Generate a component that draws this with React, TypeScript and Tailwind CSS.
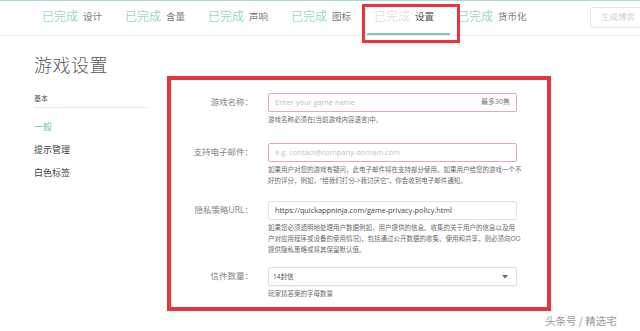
import { useState } from "react";

type Step = { label: string; active?: boolean };

const STEPS: Step[] = [
  { label: "设计" },
  { label: "含量" },
  { label: "声响" },
  { label: "图标" },
  { label: "设置", active: true },
  { label: "货币化" },
];

const SIDE_LINKS = ["一般", "提示管理", "白色标签"];

const SANS = "font-['Open_Sans','Noto_Sans_CJK_SC',sans-serif]";

function Field({
  label,
  className,
  children,
  help,
}: {
  label: string;
  className: string;
  children: React.ReactNode;
  help: string[];
}) {
  return (
    <div className={"flex " + className}>
      <div className="w-[82px] h-[19px] flex items-center justify-end text-[8.5px] text-[#858585]">
        {label}
      </div>
      <div className="ml-[15px] w-[249px]">
        {children}
        <div className="mt-[2px] text-[6.5px] leading-[11px] text-[#6a6a6a] whitespace-nowrap">
          {help.map((line) => (
            <div key={line}>{line}</div>
          ))}
        </div>
      </div>
    </div>
  );
}

export default function App() {
  const [letters, setLetters] = useState("14封信");

  return (
    <div
      className={
        "relative w-[640px] h-[331px] overflow-hidden bg-white " + SANS
      }
    >
      <div className="h-px bg-[#a9ddd2]" />

      {/* 步骤导航 */}
      <nav className="flex h-[35px] border-b border-[#ececec] pl-[35px]">
        {STEPS.map((s) => (
          <div
            key={s.label}
            className={
              "w-[83px] pl-[7px] flex items-center gap-[5px] border-b-2 " +
              (s.active ? "border-[#7ccab6]" : "border-transparent")
            }
          >
            <span
              className={
                "text-[12px] font-light " +
                (s.active ? "text-[#d6d6d6]" : "text-[#6ec6b1]")
              }
            >
              已完成
            </span>
            <span
              className={
                "text-[9.5px] " + (s.active ? "text-[#555]" : "text-[#7a7a7a]")
              }
            >
              {s.label}
            </span>
          </div>
        ))}
        <div className="ml-auto mt-[6px] h-[21px] w-[56px] -mr-[6px] flex items-center pl-[10px] border border-[#e6e6e6] rounded-[2px] text-[8.5px] text-[#cfcfcf]">
          生成博弈
        </div>
      </nav>

      <div className="flex pl-[34px]">
        {/* 侧边栏 */}
        <aside className="w-[113px] pt-[17px]">
          <h1 className="text-[18px] leading-[24px] font-light text-[#5a5a5a] tracking-[0.5px]">
            游戏设置
          </h1>
          <div className="mt-[17px] pb-[3px] border-b border-[#e8e8e8] text-[7px] leading-[10px] text-[#555]">
            基本
          </div>
          <ul className="mt-[12px] space-y-[9px]">
            {SIDE_LINKS.map((l, i) => (
              <li
                key={l}
                className={
                  "text-[9px] leading-[14px] " +
                  (i === 0 ? "text-[#6ec6b1]" : "text-[#444]")
                }
              >
                {l}
              </li>
            ))}
          </ul>
        </aside>

        {/* 表单 */}
        <section className="ml-[20px] mt-[40px] w-[384px] h-[235px] border-[4px] border-[#e8353b] pt-[13px]">
          <Field
            label="游戏名称："
            className=""
            help={["游戏名称必须在(当前游戏内容语言)中。"]}
          >
            <div className="h-[19px] flex items-center justify-between px-[6px] border border-[#e3abab] rounded-[2px]">
              <span className="text-[7.5px] text-[#bdbdbd]">
                Enter your game name
              </span>
              <span className="text-[7px] text-[#777]">最多30焦</span>
            </div>
          </Field>

          <Field
            label="支持电子邮件："
            className="mt-[18px]"
            help={[
              "如果用户对您的游戏有疑问，此电子邮件将在支持部分使用。如果用户给您的游戏一个不",
              "好的评分，例如，“给我们打分->我讨厌它”，你会收到电子邮件通知。",
            ]}
          >
            <div className="h-[19px] flex items-center px-[6px] border border-[#e3abab] rounded-[2px]">
              <span className="text-[7.5px] text-[#c4c4c4]">
                e.g. contact@company-domain.com
              </span>
            </div>
          </Field>

          <Field
            label="隐私策略URL："
            className="mt-[15px]"
            help={[
              "如果您必须透明地处理用户数据例如，用户提供的信息、收集的关于用户的信息以及用",
              "户对应用程序或设备的使用情况)，包括通过公开数据的收集、使用和共享，则必须向OO",
              "提供隐私策略或将其保留默认值。",
            ]}
          >
            <div className="h-[19px] flex items-center px-[6px] border border-[#e4e4e4] rounded-[2px]">
              <span className="text-[7.3px] text-[#444]">
                https://quickappninja.com/game-privacy-policy.html
              </span>
            </div>
          </Field>

          <Field
            label="信件数量："
            className="mt-[12px]"
            help={["玩家猜答案的字母数量"]}
          >
            <div
              className="h-[19px] flex items-center justify-between pl-[4px] pr-[8px] border border-[#e0e0e0] rounded-[2px] shadow-[0_1px_1px_rgba(0,0,0,0.06)]"
              onClick={() => setLetters(letters)}
            >
              <span className="text-[6.5px] text-[#555]">{letters}</span>
              <svg width="6" height="4" viewBox="0 0 6 4">
                <path d="M0 0h6L3 3.5z" fill="#666" />
              </svg>
            </div>
          </Field>
        </section>
      </div>

      {/* 标注框 */}
      <div className="absolute left-[362px] top-[4px] w-[98px] h-[39px] border-[3px] border-[#e8353b]" />

      <div className="absolute left-[545px] top-[313px] text-[10.5px] text-[#9a9a9a] font-['Noto_Sans_CJK_SC',sans-serif] [text-shadow:0_0_2px_#fff]">
        头条号 / 精选宅
      </div>
    </div>
  );
}
